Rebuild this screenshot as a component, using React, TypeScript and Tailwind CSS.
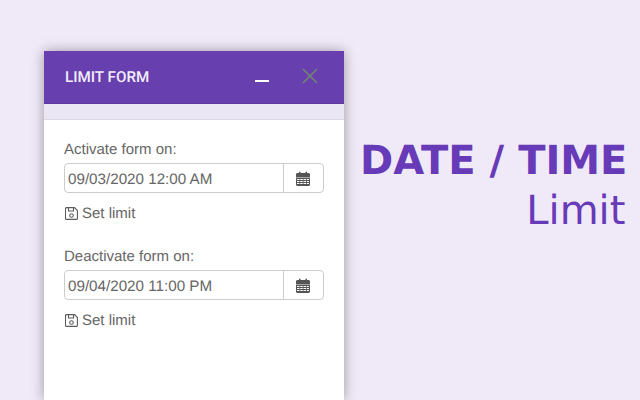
function CalendarIcon() {
  return (
    <svg width="14" height="15" viewBox="0 0 14 15" className="mr-[1px] block">
      <path fill="#555" d="M0 3.500C0 2.700.7 2 1.500 2H3V.8h1.500V2h5V.8H11V2h1.500c.8 0 1.500.7 1.500 1.500V6H0z" />
      <path
        fill="#555"
        fillRule="evenodd"
        d="M0 6.500h14v7c0 .8-.7 1.500-1.500 1.500h-11C.7 15 0 14.300 0 13.500zM1 8v1h2.500V8zm3.250 0v1h2.500V8zm3.250 0v1H10V8zm3.250 0v1H13V8zM1 10v1h2.500v-1zm3.250 0v1h2.500v-1zm3.250 0v1H10v-1zm3.250 0v1H13v-1zM1 12v1h2.500v-1zm3.250 0v1h2.500v-1zm3.250 0v1H10v-1zm3.250 0v1H13v-1z"
      />
    </svg>
  )
}

function FloppyIcon() {
  return (
    <svg width="13" height="13" viewBox="0 0 13 13" fill="none" stroke="#5c5c5c" strokeWidth="1.1" className="ml-[1px] block">
      <path d="M1.500.6h8L12.400 3.500v7.900c0 .6-.4 1-1 1H1.500c-.6 0-1-.4-1-1V1.600c0-.6.4-1 1-1z" />
      <path d="M3.500.6v3.400h5V.6" />
      <circle cx="6.500" cy="8.500" r="1.800" />
    </svg>
  )
}

function DateField({ label, value }: { label: string; value: string }) {
  return (
    <div className="flex flex-col">
      <label className="h-5 text-[15px] leading-5 text-[#666]">{label}</label>
      <div className="mt-[3px] flex h-[30px] w-[260px] rounded-[4px] border border-[#ccc] bg-white">
        <div className="flex-1 pl-[3px] text-[15.2px] leading-[31px] text-[#666]">{value}</div>
        <div className="flex w-[40px] items-center justify-center border-l border-[#ccc]">
          <CalendarIcon />
        </div>
      </div>
      <div className="mt-[10px] flex h-5 items-center gap-[4px] text-[15px] leading-5 text-[#666]">
        <FloppyIcon />
        <span className="pt-[2px]">Set limit</span>
      </div>
    </div>
  )
}

export default function App() {
  return (
    <div className="flex h-[400px] w-[640px] overflow-hidden bg-[#f0e9f7] font-['Liberation_Sans',Arial,sans-serif] [text-rendering:geometricPrecision]">
      {/* Form window */}
      <div className="ml-[44px] mt-[51px] flex h-[349px] w-[300px] flex-col bg-white shadow-[0_0_12px_rgba(0,0,0,0.35)]">
        <div className="flex h-[53px] items-center border-b border-[#5e3a9e] bg-[#673fae] pl-[21px]">
          <span className="w-[84px] whitespace-nowrap font-['Roboto',sans-serif] text-[15.2px] font-medium text-[#f3eefa]">LIMIT FORM</span>
          <span className="ml-[106px] mt-[8px] h-[2px] w-[14px] bg-white" />
          <svg width="16" height="16" viewBox="0 0 16 16" className="ml-[33px] mb-[3px]">
            <path d="M1 1l14 14M15 1L1 15" stroke="#74856f" strokeWidth="1.6" fill="none" />
          </svg>
        </div>
        <div className="h-[16px] border-b border-[#dcd8e4] bg-[#ebe6f4]" />
        <div className="flex flex-col gap-[24px] px-[20px] pt-[20px]">
          <DateField label="Activate form on:" value="09/03/2020 12:00 AM" />
          <DateField label="Deactivate form on:" value="09/04/2020 11:00 PM" />
        </div>
      </div>

      {/* Caption */}
      <div className="ml-[16px] mt-[136px] flex flex-1 flex-col items-end pr-[14px] font-['DejaVu_Sans',sans-serif] text-[#673ab7]">
        <div className="text-[40px] font-bold leading-[50px] whitespace-nowrap">DATE / TIME</div>
        <div className="pr-[2px] text-[40px] leading-[50px]">Limit</div>
      </div>
    </div>
  )
}
